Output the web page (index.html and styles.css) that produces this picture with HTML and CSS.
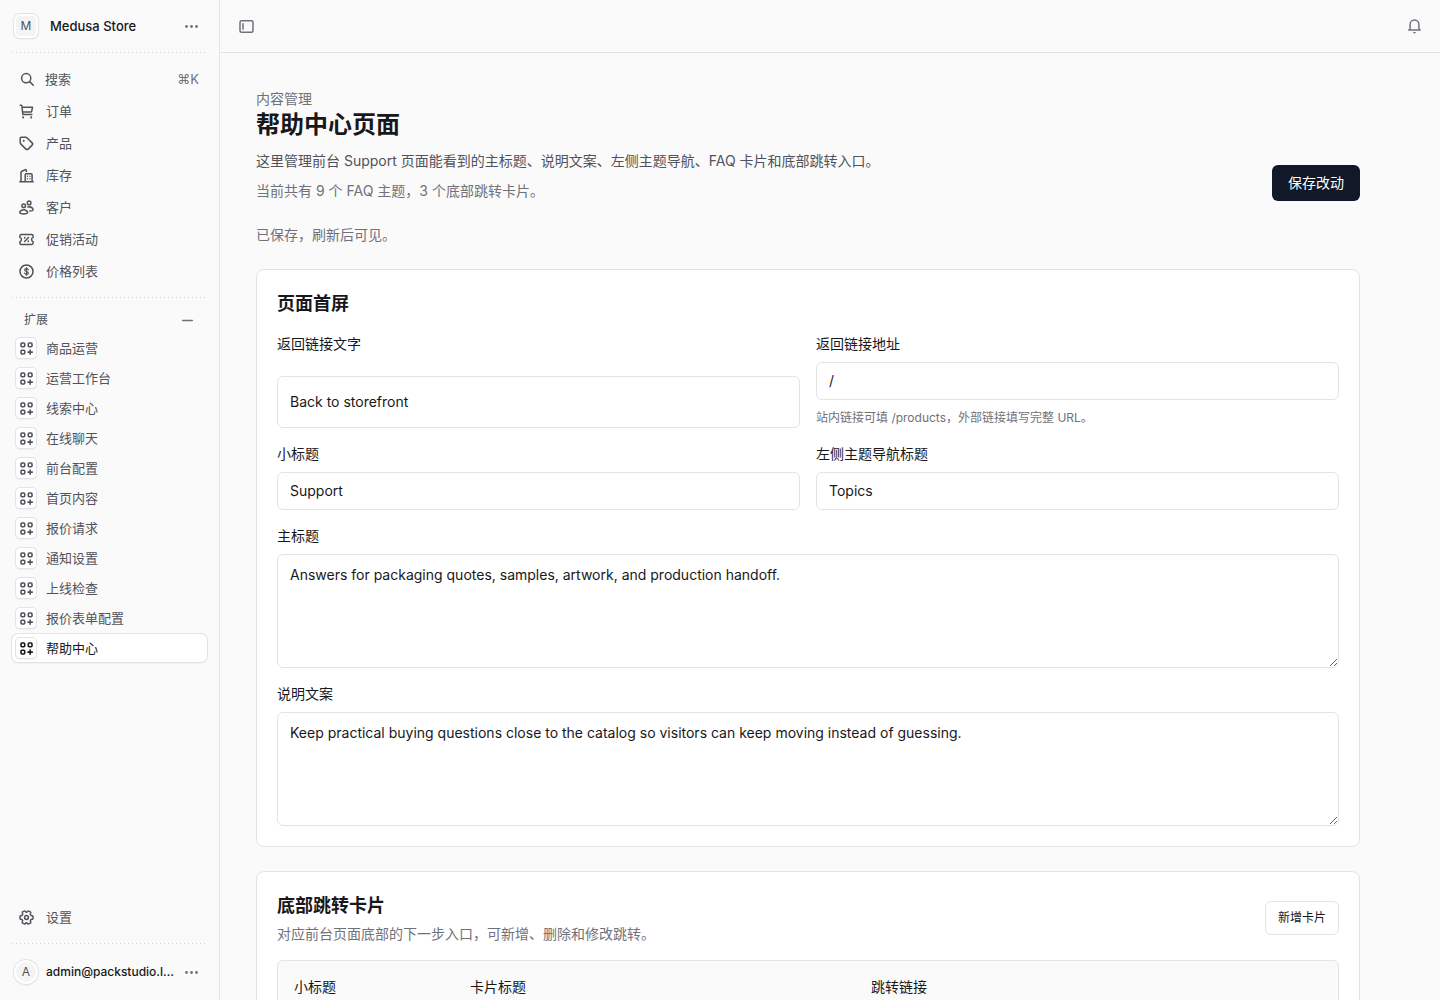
FILE: index.html
```html
<!DOCTYPE html>
<html lang="zh-CN">
<head>
<meta charset="utf-8">
<meta name="viewport" content="width=device-width, initial-scale=1">
<title>帮助中心页面</title>
<link rel="stylesheet" href="styles.css">
</head>
<body>
<svg class="sprite" aria-hidden="true">
  <symbol id="i-dots" viewBox="0 0 15 15"><g fill="currentColor"><circle cx="2.5" cy="7.5" r="1.4"/><circle cx="7.5" cy="7.5" r="1.4"/><circle cx="12.5" cy="7.5" r="1.4"/></g></symbol>
  <symbol id="i-search" viewBox="0 0 15 15"><circle cx="6.2" cy="6.2" r="4.6"/><path d="M9.600 9.600l3.700 3.700"/></symbol>
  <symbol id="i-cart" viewBox="0 0 15 15"><path d="M1.200 1.200h.8c.5 0 .9.300.9.800l.9 8.500h9M3.100 3.200h10.400l-.8 4.200c-.1.400-.4.700-.8.700H3.600"/><path d="M4.100 13.300v.1M12.200 13.300v.1" stroke-width="2"/></symbol>
  <symbol id="i-tag" viewBox="0 0 15 15"><path d="M1.200 2.300v4.500c0 .4.200.8.500 1.100l5.200 5.200c.6.600 1.600.6 2.200 0l4-4c.6-.6.6-1.600 0-2.200L7.900 1.700c-.3-.3-.7-.5-1.100-.5H2.300c-.6 0-1.100.5-1.100 1.100z"/><circle cx="4.700" cy="4.700" r="1" fill="currentColor" stroke="none"/></symbol>
  <symbol id="i-building" viewBox="0 0 15 15"><path d="M.8 13.800h13.400M2 13.700V4.400c0-.4.200-.7.600-.9L6.200 1.600c.5-.3 1.100.1 1.100.7v1.200M6.200 13.700V6.700c0-.6.400-1 1-1h4.900c.6 0 1 .4 1 1v7"/><path d="M8.500 8.200v.1M11 8.200v.1M8.500 10.700v.1M11 10.700v.1" stroke-width="1.400"/></symbol>
  <symbol id="i-users" viewBox="0 0 15 15"><circle cx="4.700" cy="5.700" r="1.800"/><circle cx="10.100" cy="2.900" r="1.800"/><path d="M4.700 9.700c-1.700 0-3.200 1-3.800 2.400-.2.600.1 1.100.6 1.300 1 .3 2 .5 3.200.5s2.200-.2 3.200-.5c.5-.2.8-.7.6-1.300-.6-1.400-2.100-2.400-3.800-2.400zM9 7.100c2-.5 4.300.4 5 2.200.2.500-.1 1.100-.6 1.300-.9.300-1.700.4-2.600.4"/></symbol>
  <symbol id="i-ticket" viewBox="0 0 15 15"><path d="M2.300 2.500h10.400c.8 0 1.400.6 1.400 1.400v1.500a2.200 2.200 0 0 0 0 4.200v1.500c0 .8-.6 1.400-1.400 1.400H2.300c-.8 0-1.400-.6-1.400-1.400V9.600a2.200 2.200 0 0 0 0-4.200V3.900c0-.8.6-1.400 1.400-1.400zM5.600 9.500l3.900-4"/><path d="M5.700 5.700v.1M9.300 9.200v.1" stroke-width="1.700"/></symbol>
  <symbol id="i-dollar" viewBox="0 0 15 15"><circle cx="7.500" cy="7.500" r="6.500"/><path d="M9.300 5.700c-.3-.7-.9-1-1.800-1-1 0-1.800.5-1.800 1.300 0 1.900 3.700 1 3.700 3 0 .8-.8 1.300-1.900 1.300-1 0-1.700-.4-1.900-1.200M7.500 3.700v7.600" stroke-width="1.200"/></symbol>
  <symbol id="i-minus" viewBox="0 0 15 15"><path d="M2.700 7.500h9.600"/></symbol>
  <symbol id="i-grid" viewBox="0 0 15 15"><g stroke-width="1.600"><rect x="2" y="2" width="3.700" height="3.700" rx="1"/><rect x="9.300" y="2" width="3.700" height="3.700" rx="1"/><rect x="2" y="9.300" width="3.700" height="3.700" rx="1"/><path d="M11.150 9v4.300M9 11.150h4.300"/></g></symbol>
  <symbol id="i-gear" viewBox="0 0 15 15"><g transform="rotate(90 7.500 7.500)"><circle cx="7.500" cy="7.500" r="1.900"/><path d="M6.600 1h1.800c.4 0 .7.300.8.700l.3 1.300 1.300.7 1.300-.4c.4-.1.800.1 1 .4l.8 1.500c.2.400.1.800-.2 1.100l-.9.900v.6l.9.900c.3.300.4.700.2 1.100l-.8 1.500c-.2.300-.6.500-1 .4l-1.300-.4-1.300.7-.3 1.300c-.1.400-.4.700-.8.700H6.600c-.4 0-.7-.3-.8-.7L5.500 12l-1.300-.7-1.300.4c-.4.100-.8-.1-1-.4l-.8-1.500c-.2-.4-.1-.8.200-1.100l.9-.9v-.6l-.9-.9c-.3-.3-.4-.7-.2-1.100l.8-1.500c.2-.3.6-.5 1-.4l1.300.4L5.500 3l.3-1.300c.1-.4.400-.7.800-.7z"/></g></symbol>
  <symbol id="i-panel" viewBox="0 0 15 15"><rect x="1" y="1.700" width="13" height="11.600" rx="1.500"/><path d="M4 4.700v5.600"/></symbol>
  <symbol id="i-bell" viewBox="0 0 15 15"><path d="M1.700 11.100c.8 0 1.400-.7 1.400-1.500V5.500a4.400 4.400 0 0 1 8.800 0v4.100c0 .8.600 1.500 1.400 1.500z"/><path d="M6 13h3c-.2.800-.8 1.400-1.500 1.400S6.200 13.800 6 13z" fill="currentColor" stroke="none"/></symbol>
</svg>

<div class="app">
  <aside class="sidebar">
    <button class="account" type="button">
      <span class="avatar">M</span>
      <span class="account-name store-name">Medusa Store</span>
      <svg class="icon muted"><use href="#i-dots"/></svg>
    </button>
    <div class="divider"></div>

    <nav class="nav" aria-label="主导航">
      <button class="nav-item search" type="button"><svg class="icon"><use href="#i-search"/></svg><span class="nav-label">搜索</span><span class="shortcut">⌘K</span></button>
      <a class="nav-item" href="#"><span class="icon-cell"><svg class="icon"><use href="#i-cart"/></svg></span>订单</a>
      <a class="nav-item" href="#"><span class="icon-cell"><svg class="icon"><use href="#i-tag"/></svg></span>产品</a>
      <a class="nav-item" href="#"><span class="icon-cell"><svg class="icon"><use href="#i-building"/></svg></span>库存</a>
      <a class="nav-item" href="#"><span class="icon-cell"><svg class="icon"><use href="#i-users"/></svg></span>客户</a>
      <a class="nav-item" href="#"><span class="icon-cell"><svg class="icon"><use href="#i-ticket"/></svg></span>促销活动</a>
      <a class="nav-item" href="#"><span class="icon-cell"><svg class="icon"><use href="#i-dollar"/></svg></span>价格列表</a>
    </nav>
    <div class="divider"></div>

    <nav class="extensions" aria-label="扩展">
      <button class="group-toggle" type="button">扩展<svg class="icon muted"><use href="#i-minus"/></svg></button>
      <a class="nav-item" href="#"><span class="icon-cell tile"><svg class="icon"><use href="#i-grid"/></svg></span>商品运营</a>
      <a class="nav-item" href="#"><span class="icon-cell tile"><svg class="icon"><use href="#i-grid"/></svg></span>运营工作台</a>
      <a class="nav-item" href="#"><span class="icon-cell tile"><svg class="icon"><use href="#i-grid"/></svg></span>线索中心</a>
      <a class="nav-item" href="#"><span class="icon-cell tile"><svg class="icon"><use href="#i-grid"/></svg></span>在线聊天</a>
      <a class="nav-item" href="#"><span class="icon-cell tile"><svg class="icon"><use href="#i-grid"/></svg></span>前台配置</a>
      <a class="nav-item" href="#"><span class="icon-cell tile"><svg class="icon"><use href="#i-grid"/></svg></span>首页内容</a>
      <a class="nav-item" href="#"><span class="icon-cell tile"><svg class="icon"><use href="#i-grid"/></svg></span>报价请求</a>
      <a class="nav-item" href="#"><span class="icon-cell tile"><svg class="icon"><use href="#i-grid"/></svg></span>通知设置</a>
      <a class="nav-item" href="#"><span class="icon-cell tile"><svg class="icon"><use href="#i-grid"/></svg></span>上线检查</a>
      <a class="nav-item" href="#"><span class="icon-cell tile"><svg class="icon"><use href="#i-grid"/></svg></span>报价表单配置</a>
      <a class="nav-item active" href="#" aria-current="page"><span class="icon-cell tile"><svg class="icon"><use href="#i-grid"/></svg></span>帮助中心</a>
    </nav>

    <nav class="nav nav-bottom" aria-label="设置">
      <a class="nav-item" href="#"><span class="icon-cell"><svg class="icon"><use href="#i-gear"/></svg></span>设置</a>
    </nav>
    <div class="divider"></div>
    <button class="account user" type="button">
      <span class="avatar round">A</span>
      <span class="account-name">admin@packstudio.local</span>
      <svg class="icon muted"><use href="#i-dots"/></svg>
    </button>
  </aside>

  <div class="workspace">
    <header class="topbar">
      <button class="icon-button" type="button" aria-label="切换侧边栏"><svg class="icon"><use href="#i-panel"/></svg></button>
      <button class="icon-button" type="button" aria-label="通知"><svg class="icon"><use href="#i-bell"/></svg></button>
    </header>

    <main class="scroll">
      <div class="page">
        <header class="page-header">
          <div>
            <p class="subtle">内容管理</p>
            <h1>帮助中心页面</h1>
            <p class="lead">这里管理前台 Support 页面能看到的主标题、说明文案、左侧主题导航、FAQ 卡片和底部跳转入口。</p>
            <p class="subtle summary">当前共有 9 个 FAQ 主题，3 个底部跳转卡片。</p>
          </div>
          <button class="primary" type="button">保存改动</button>
        </header>
        <p class="subtle" role="status">已保存，刷新后可见。</p>

        <section class="card">
          <h2>页面首屏</h2>
          <div class="fields">
            <label class="field">返回链接文字<input type="text" value="Back to storefront"></label>
            <label class="field">返回链接地址<input type="text" value="/"><span class="hint">站内链接可填 /products，外部链接填写完整 URL。</span></label>
            <label class="field">小标题<input type="text" value="Support"></label>
            <label class="field">左侧主题导航标题<input type="text" value="Topics"></label>
            <label class="field wide">主标题<textarea>Answers for packaging quotes, samples, artwork, and production handoff.</textarea></label>
            <label class="field wide">说明文案<textarea>Keep practical buying questions close to the catalog so visitors can keep moving instead of guessing.</textarea></label>
          </div>
        </section>

        <section class="card">
          <div class="card-header">
            <div>
              <h2>底部跳转卡片</h2>
              <p class="subtle card-note">对应前台页面底部的下一步入口，可新增、删除和修改跳转。</p>
            </div>
            <button class="secondary" type="button">新增卡片</button>
          </div>
          <div class="link-row">
            <label class="field">小标题<input type="text"></label>
            <label class="field">卡片标题<input type="text"></label>
            <label class="field">跳转链接<input type="text"></label>
            <button class="secondary remove" type="button" aria-label="删除"><svg class="icon"><use href="#i-minus"/></svg></button>
          </div>
        </section>
      </div>
    </main>
  </div>
</div>
</body>
</html>
```
FILE: styles.css
```css
:root {
  --bg: #fafafa;
  --border: #e4e4e7;
  --text: #18181b;
  --text-soft: #52525b;
  --text-muted: #71717a;
}

* {
  box-sizing: border-box;
}

body,
h1,
h2,
p {
  margin: 0;
}

body {
  background: var(--bg);
  color: var(--text);
  font: 400 14px/20px Inter, "Noto Sans CJK SC", sans-serif;
}

button,
input,
textarea {
  font: inherit;
  color: inherit;
}

button {
  padding: 0;
  border: 0;
  background: none;
  cursor: pointer;
}

a {
  color: inherit;
  text-decoration: none;
}

.sprite {
  display: none;
}

.icon {
  width: 15px;
  height: 15px;
  flex: none;
  fill: none;
  stroke: currentColor;
  stroke-width: 1.5;
  stroke-linecap: round;
  stroke-linejoin: round;
}

#i-dots circle {
  stroke: none;
}

.muted {
  color: var(--text-muted);
}

.app {
  display: flex;
  height: 100vh;
  overflow: hidden;
}

/* Sidebar */

.sidebar {
  display: flex;
  flex-direction: column;
  flex: none;
  width: 220px;
  border-right: 1px solid var(--border);
  font-size: 13px;
}

.account {
  display: flex;
  align-items: center;
  gap: 8px;
  height: 52px;
  padding: 0 20px 0 14px;
  font-weight: 500;
  text-align: left;
}

.account.user {
  height: 56px;
  font-size: 12px;
}

.account-name {
  flex: 1;
  min-width: 0;
  overflow: hidden;
  text-overflow: ellipsis;
  white-space: nowrap;
}

.store-name {
  padding-left: 4px;
}

.avatar {
  display: flex;
  align-items: center;
  justify-content: center;
  flex: none;
  width: 24px;
  height: 24px;
  border: 2px solid #fff;
  border-radius: 6px;
  background: #f4f4f5;
  box-shadow: 0 0 0 1px var(--border), 0 1px 2px rgb(0 0 0 / 12%);
  color: var(--text-soft);
  font-size: 12px;
  font-weight: 400;
}

.avatar.round {
  border-radius: 50%;
}

.divider {
  height: 1px;
  margin: 0 13px 0 12px;
  background: linear-gradient(90deg, #d4d4d8 1px, transparent 1px) 0 0 / 4px 1px;
}

.nav {
  display: flex;
  flex-direction: column;
  gap: 4px;
  padding: 12px;
}

.nav-bottom {
  margin-top: auto;
}

.extensions {
  display: flex;
  flex-direction: column;
  gap: 2px;
  padding: 10px 12px;
}

.nav-item {
  display: flex;
  align-items: center;
  gap: 10px;
  height: 28px;
  padding: 0 8px 0 4px;
  border-radius: 6px;
  color: var(--text-soft);
}

.nav-item.search {
  padding-left: 8px;
}

.nav-label {
  flex: 1;
  text-align: left;
}

.shortcut {
  color: var(--text-muted);
}

.nav-item.active {
  background: #fff;
  box-shadow: 0 0 0 1px var(--border), 0 1px 2px rgb(0 0 0 / 12%);
  color: var(--text);
}

.icon-cell {
  display: flex;
  align-items: center;
  justify-content: center;
  flex: none;
  width: 20px;
  height: 20px;
}

.tile {
  border-radius: 4px;
  background: #fff;
  box-shadow: 0 0 0 1px var(--border), 0 1px 2px rgb(0 0 0 / 12%);
}

.group-toggle {
  display: flex;
  align-items: center;
  justify-content: space-between;
  height: 24px;
  padding: 0 12px;
  color: var(--text-soft);
  font-size: 12px;
}

/* Workspace */

.workspace {
  display: flex;
  flex-direction: column;
  flex: 1;
  min-width: 0;
}

.topbar {
  display: flex;
  align-items: center;
  justify-content: space-between;
  flex: none;
  height: 53px;
  padding: 0 12px;
  border-bottom: 1px solid var(--border);
}

.icon-button {
  display: flex;
  align-items: center;
  justify-content: center;
  width: 28px;
  height: 28px;
  color: var(--text-muted);
}

.scroll {
  flex: 1;
  min-height: 0;
  padding: 12px;
  overflow-y: auto;
  scrollbar-width: none;
}

.page {
  display: flex;
  flex-direction: column;
  gap: 24px;
  max-width: 1152px;
  padding: 24px;
}

.page-header {
  display: flex;
  align-items: flex-end;
  justify-content: space-between;
  gap: 16px;
}

h1 {
  font-size: 24px;
  font-weight: 700;
  line-height: 32px;
}

h2 {
  font-size: 18px;
  font-weight: 700;
  line-height: 28px;
}

.subtle {
  color: var(--text-muted);
}

.lead {
  margin-top: 10px;
  color: var(--text-soft);
}

.summary {
  margin-top: 10px;
}

.primary {
  flex: none;
  height: 36px;
  padding: 0 16px;
  border-radius: 6px;
  background: #111827;
  color: #fff;
}

.secondary {
  flex: none;
  height: 34px;
  padding: 0 12px;
  border: 1px solid var(--border);
  border-radius: 6px;
  background: #fff;
  font-size: 12px;
}

.remove {
  display: flex;
  align-items: center;
  justify-content: center;
  width: 50px;
}

.card {
  display: flex;
  flex-direction: column;
  gap: 16px;
  padding: 20px;
  border: 1px solid var(--border);
  border-radius: 8px;
  background: #fff;
}

.card-header {
  display: flex;
  align-items: center;
  justify-content: space-between;
  gap: 16px;
}

.card-note {
  margin-top: 4px;
}

.fields {
  display: grid;
  grid-template-columns: 1fr 1fr;
  gap: 16px;
}

.field {
  display: grid;
  gap: 8px;
  min-width: 0;
}

.field.wide {
  grid-column: 1 / -1;
}

.field input,
.field textarea {
  width: 100%;
  min-height: 38px;
  padding: 8px 12px;
  border: 1px solid var(--border);
  border-radius: 6px;
  background: #fff;
}

.field textarea {
  display: block;
  height: 114px;
  padding: 10px 12px;
  resize: vertical;
}

.hint {
  color: var(--text-muted);
  font-size: 12px;
}

.link-row {
  display: grid;
  grid-template-columns: 160px 1fr 1fr auto;
  align-items: end;
  gap: 16px;
  padding: 16px;
  border: 1px solid var(--border);
  border-radius: 6px;
  background: var(--bg);
}
```
